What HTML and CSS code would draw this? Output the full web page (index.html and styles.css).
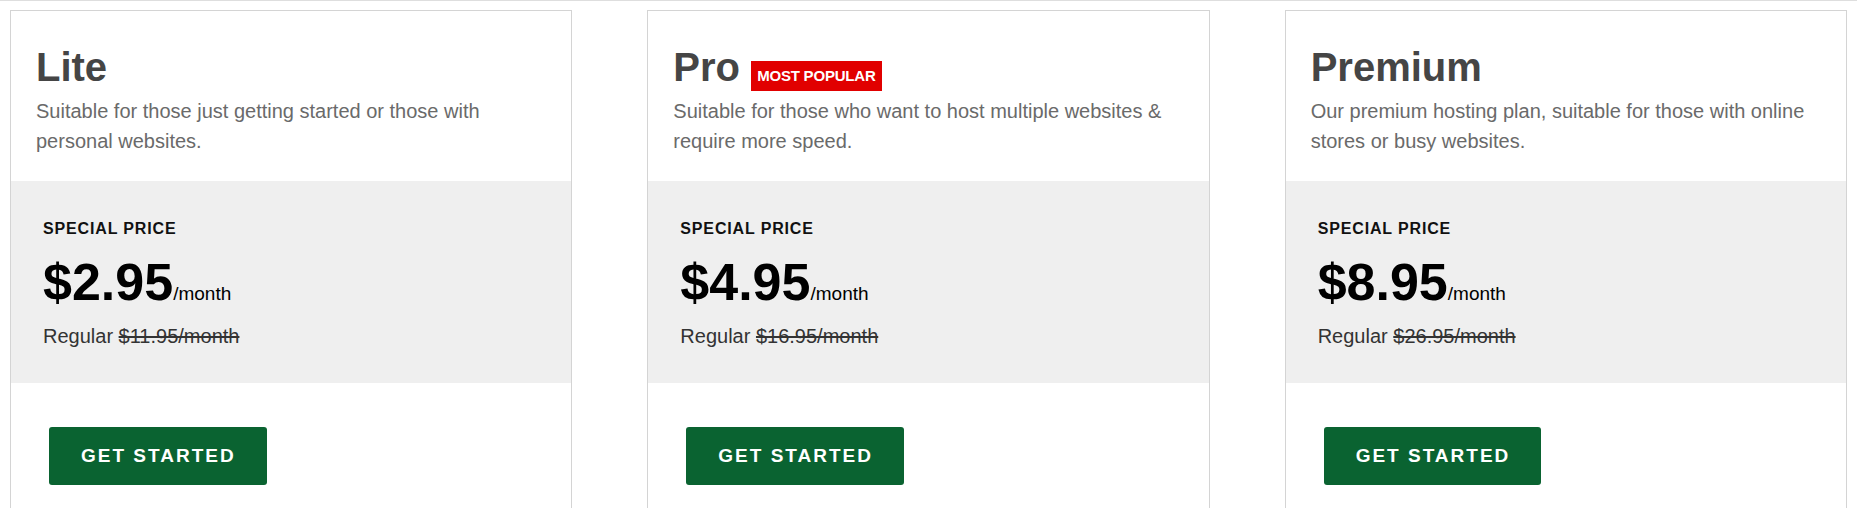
FILE: index.html
```html
<!DOCTYPE html>
<html lang="en">
<head>
<meta charset="utf-8">
<title>Hosting plans</title>
<link rel="stylesheet" href="styles.css">
</head>
<body>
<div class="plans">
  <div class="plan">
    <div class="plan-head">
      <h2 class="plan-name">Lite</h2>
      <p class="plan-desc">Suitable for those just getting started or those with personal websites.</p>
    </div>
    <div class="plan-price">
      <div class="price-label">SPECIAL PRICE</div>
      <div class="price-now">$2.95<span class="price-unit">/month</span></div>
      <div class="price-regular">Regular <s>$11.95/month</s></div>
    </div>
    <div class="plan-cta">
      <a class="btn" href="#">GET STARTED</a>
    </div>
  </div>
  <div class="plan">
    <div class="plan-head">
      <h2 class="plan-name">Pro <span class="badge">MOST POPULAR</span></h2>
      <p class="plan-desc">Suitable for those who want to host multiple websites &amp; require more speed.</p>
    </div>
    <div class="plan-price">
      <div class="price-label">SPECIAL PRICE</div>
      <div class="price-now">$4.95<span class="price-unit">/month</span></div>
      <div class="price-regular">Regular <s>$16.95/month</s></div>
    </div>
    <div class="plan-cta">
      <a class="btn" href="#">GET STARTED</a>
    </div>
  </div>
  <div class="plan">
    <div class="plan-head">
      <h2 class="plan-name">Premium</h2>
      <p class="plan-desc">Our premium hosting plan, suitable for those with online stores or busy websites.</p>
    </div>
    <div class="plan-price">
      <div class="price-label">SPECIAL PRICE</div>
      <div class="price-now">$8.95<span class="price-unit">/month</span></div>
      <div class="price-regular">Regular <s>$26.95/month</s></div>
    </div>
    <div class="plan-cta">
      <a class="btn" href="#">GET STARTED</a>
    </div>
  </div>
</div>
</body>
</html>
```
FILE: styles.css
```css
html, body {
  margin: 0;
  padding: 0;
  background: #fff;
}
body {
  border-top: 1px solid #dedede;
  font-family: "Liberation Sans", Arial, sans-serif;
  color: #111;
}
.plans {
  display: grid;
  grid-template-columns: repeat(3, 1fr);
  column-gap: 75px;
  padding: 9px 10px 0;
}
.plan {
  border: 1px solid #d4d4d4;
  background: #fff;
  min-height: 560px;
}
.plan-head {
  padding: 32px 25px 25px;
}
.plan-name {
  margin: 0;
  font-size: 40px;
  line-height: 48px;
  font-weight: bold;
  color: #454545;
}
.badge {
  display: inline-block;
  background: #e10000;
  color: #fff;
  font-size: 15px;
  line-height: 17px;
  padding: 6px 6px 7px;
  font-weight: bold;
  letter-spacing: -0.2px;
  vertical-align: baseline;
}
.plan-desc {
  margin: 5px 0 0;
  font-size: 20px;
  line-height: 30px;
  color: #6a6a6a;
}
.plan-price {
  background: #efefef;
  padding: 38px 32px 32px;
}
.price-label {
  font-size: 16px;
  line-height: 20px;
  font-weight: bold;
  letter-spacing: 0.85px;
  color: #111;
}
.price-now {
  margin-top: 13px;
  font-size: 52px;
  line-height: 60px;
  font-weight: bold;
  color: #000;
}
.price-unit {
  font-size: 19px;
  line-height: 1;
  font-weight: normal;
}
.price-regular {
  margin-top: 9px;
  font-size: 20px;
  line-height: 30px;
  color: #333;
}
.price-regular s {
  text-decoration-thickness: 1.5px;
}
.plan-cta {
  padding: 44px 38px 40px;
}
.btn {
  display: inline-block;
  background: #0a6331;
  color: #fff;
  text-decoration: none;
  font-size: 19px;
  line-height: 22px;
  font-weight: bold;
  letter-spacing: 2px;
  padding: 18px 31px 18px 32px;
  border-radius: 3px;
}
```
